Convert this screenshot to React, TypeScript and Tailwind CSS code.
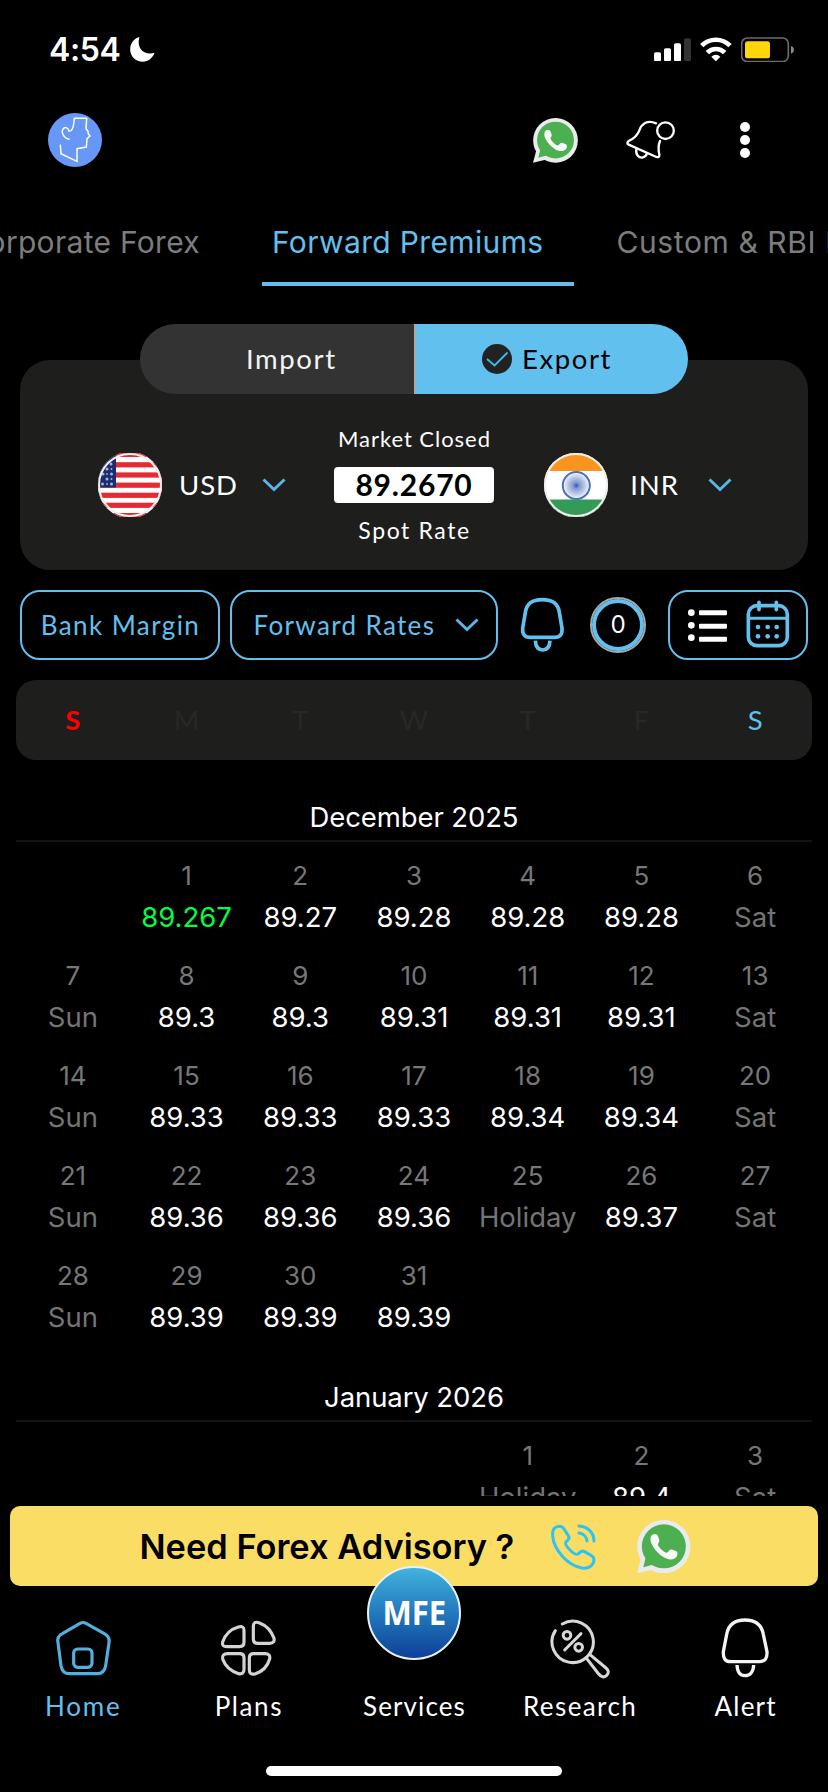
import type { ReactNode } from "react";

function WhatsApp({ className }: { className: string }) {
  return (
    <svg viewBox="670 89 161 161" className={className}>
      <path d="M670 249 L683 201 L722 237 Z" fill="#e9ebee" />
      <circle cx="750.500" cy="169" r="80" fill="#e9ebee" />
      <path d="M689 231 L697 198 L722 222 Z" fill="#4caf50" />
      <circle cx="750.500" cy="168" r="66" fill="#4caf50" />
      <path
        fill="#fafafa"
        d="M719 132H727C731 132 732 136 736 146C738 152 737 154 733 160C730 164 740 174 746 180C752 186 759 189 762 186L768 179C771 176 775 177 779 179L788 183C792 186 792 191 790 197C786 206 773 209 762 206C740 200 716 173 711 153C709 142 713 134 719 132Z"
      />
    </svg>
  );
}

function Chevron({ className }: { className: string }) {
  return (
    <svg viewBox="0 0 24 14" className={className} fill="none" stroke="#5bb5e6" strokeWidth="3">
      <path d="M1.500 1.500 L12 11.500 L22.500 1.500" />
    </svg>
  );
}

function StatusBar() {
  return (
    <div className="flex h-[99px] items-center justify-between pl-[49px] pr-[33.500px]">
      <div className="flex items-center">
        <span className="w-[81px] text-[32px] font-semibold tracking-[-0.400px]">4:54</span>
        <svg viewBox="390 111 74 76" className="h-[25px] w-[24.700px]" fill="#fff">
          <path d="M418 111C400 116 390 132 390 149C390 170 407 186 428 186C445 186 459 175 464 159C434 168 408 148 418 111Z" />
        </svg>
      </div>
      <div className="flex items-center gap-[9.500px]">
        <svg viewBox="717 113 111 70" className="h-[23.300px] w-[37px]" fill="#fff">
          <rect x="717" y="156" width="21" height="27" rx="5" />
          <rect x="747" y="144" width="21" height="39" rx="5" />
          <rect x="777" y="129" width="21" height="54" rx="5" />
          <rect x="807" y="114" width="21" height="69" rx="5" fill="#333" />
        </svg>
        <svg viewBox="857 110 95 74" className="h-[24.700px] w-[31.700px]" fill="none" stroke="#fff" strokeWidth="14">
          <path d="M862 136A60 60 0 0 1 947 136" />
          <path d="M879 157A36 36 0 0 1 931 157" />
          <path d="M904.500 183L891 169Q904.500 158 918 169Z" fill="#fff" stroke="none" />
        </svg>
        <svg viewBox="981 110 160 77" className="h-[25.700px] w-[53.300px]">
          <rect x="983" y="113" width="140" height="71" rx="17" fill="none" stroke="#6b6b6b" strokeWidth="5" />
          <rect x="993" y="123" width="75" height="51" rx="8" fill="#ffd60a" />
          <path d="M1131 137Q1140 140 1140 148.500Q1140 157 1131 160Z" fill="#8a8a8a" />
        </svg>
      </div>
    </div>
  );
}

function Header() {
  return (
    <div className="flex h-[82px] items-center pl-12 pr-[78px]">
      <svg viewBox="144 339 162 162" className="h-[54px] w-[54px]">
        <circle cx="225" cy="420" r="81" fill="#6797f7" />
        <path
          d="M209 418C190 415 182 395 190 386C196 379 206 384 206 393C214 394 219 388 221 372L223 355H260L258 386L264 394L265 402L270 408L261 416L259 441L231 446V484L183 461L181 434"
          fill="none"
          stroke="#fff"
          strokeWidth="4.500"
        />
      </svg>
      <WhatsApp className="ml-auto h-[45px] w-[45px]" />
      <svg
        viewBox="632 358 152 124"
        className="ml-[46.500px] h-[41.300px] w-[50.700px]"
        fill="none"
        stroke="#fff"
        strokeWidth="7"
        strokeLinecap="round"
      >
        <path d="M725 371C698 359 681 374 675 392C669 408 660 416 643 424Q635 430 643 435L726 472Q736 475 735 465C731 448 731 438 737 424" />
        <circle cx="753.500" cy="393" r="25" />
        <path d="M666 449C663 465 673 475 684 474C691 473 696 468 698 461" />
      </svg>
      <div className="ml-[64.500px] flex flex-col gap-[2.800px]">
        <i className="size-[10px] rounded-full bg-white" />
        <i className="size-[10px] rounded-full bg-white" />
        <i className="size-[10px] rounded-full bg-white" />
      </div>
    </div>
  );
}

function Tabs() {
  return (
    <div className="flex h-[105px] overflow-hidden whitespace-nowrap pt-[16px] text-[30px] leading-[90px] tracking-[0.300px] text-[#7d7d7d]">
      <div className="flex w-[262px] shrink-0 justify-end pr-[62px]">Corporate Forex</div>
      <div className="h-[89px] w-[312px] shrink-0 border-b-4 border-[#62c0ef] pl-[10px] tracking-[0.350px] text-[#62c0ef]">
        Forward Premiums
      </div>
      <div className="shrink-0 pl-[42.500px] tracking-[0.600px]">Custom &amp; RBI Rates</div>
    </div>
  );
}

function Flag({ children }: { children: ReactNode }) {
  return (
    <svg viewBox="0 0 64 64" className="size-16 shrink-0">
      <g clipPath="inset(0 round 32px)">{children}</g>
      <circle cx="32" cy="32" r="31" fill="none" stroke="#efefef" strokeWidth="2" />
    </svg>
  );
}

const usStripes = [-1.200, 9.200, 19.400, 29.600, 39.700, 49.700, 60];
const usStars = [
  [13, 11], [9, 16], [13.500, 21], [5, 21], [9, 26], [4.500, 31], [13.500, 31],
];

function UsFlag() {
  return (
    <Flag>
      <rect width="64" height="64" fill="#fff" />
      {usStripes.map((y) => (
        <rect key={y} y={y} width="64" height="5.200" fill="#e42a33" />
      ))}
      <rect width="18" height="34.500" fill="#1b2d6e" />
      {usStars.map(([x, y]) => (
        <circle key={`${x}-${y}`} cx={x} cy={y} r="1.500" fill="#aab4d6" />
      ))}
      <circle cx="9" cy="21" r="0.900" fill="#aab4d6" />
      <circle cx="9" cy="31" r="0.900" fill="#aab4d6" />
      <circle cx="13.500" cy="16" r="0.900" fill="#aab4d6" />
      <circle cx="13.500" cy="26" r="0.900" fill="#aab4d6" />
    </Flag>
  );
}

function IndiaFlag() {
  return (
    <Flag>
      <defs>
        <radialGradient id="chakra">
          <stop offset="0" stopColor="#2a56ae" />
          <stop offset="0.250" stopColor="#7f98cf" />
          <stop offset="1" stopColor="#e3e9f5" />
        </radialGradient>
      </defs>
      <rect width="64" height="64" fill="#fff" />
      <rect width="64" height="18" fill="#fb941e" />
      <rect y="46.500" width="64" height="18" fill="#349a57" />
      <circle cx="32.300" cy="32.500" r="12" fill="url(#chakra)" />
      <circle cx="32.300" cy="32.500" r="13.500" fill="none" stroke="#4a6fbb" strokeWidth="2" />
    </Flag>
  );
}

function Currency({ flag, code }: { flag: ReactNode; code: string }) {
  return (
    <div className="flex items-center">
      {flag}
      <span className="w-[100px] pr-[7px] text-center text-[27.500px] tracking-[0.900px]">{code}</span>
      <Chevron className="h-[14px] w-6" />
    </div>
  );
}

function RateCard() {
  return (
    <div className="font-[Lato,sans-serif]">
      <div className="relative z-10 mx-auto flex h-[70px] w-[548px] overflow-hidden rounded-full text-[27.500px] tracking-[1.600px]">
        <div className="flex w-[276px] items-center border-r-2 border-[#a9a9a9] bg-[#333] pl-[106px] text-[#f4f4f4]">
          Import
        </div>
        <div className="flex w-[272px] items-center bg-[#62c0ef] pl-[66px] text-black">
          <svg viewBox="0 0 30 30" className="mr-[10px] size-[30px]">
            <circle cx="15" cy="15" r="15" fill="#222" />
            <path d="M5 15L12.500 21.500L25.500 8.500" fill="none" stroke="#35bdf0" strokeWidth="1.800" />
          </svg>
          Export
        </div>
      </div>
      <div className="mx-5 -mt-[34px] flex h-[210px] rounded-[30px] bg-[#1e1e1c] pl-[78px] pt-[59px]">
        <div className="flex h-[132px] items-center">
          <Currency flag={<UsFlag />} code="USD" />
          <div className="ml-[48px] mr-[50px] flex w-[160px] flex-col items-center whitespace-nowrap">
            <div className="h-[30px] pl-px text-[22px] leading-[30px] tracking-[0.950px]">Market Closed</div>
            <div className="my-[13px] h-[36px] w-[160px] rounded bg-white text-center text-[30px] font-bold leading-[35px] tracking-[0.800px] text-black">
              89.2670
            </div>
            <div className="h-[30px] pl-px text-[23px] leading-[29px] tracking-[1.600px]">Spot Rate</div>
          </div>
          <Currency flag={<IndiaFlag />} code="INR" />
        </div>
      </div>
    </div>
  );
}

function Toolbar() {
  return (
    <div className="mx-5 mt-5 flex h-[70px] items-center font-[Lato,sans-serif] text-[26px] text-[#62c0ef]">
      <div className="flex h-[70px] w-[200px] items-center justify-center whitespace-nowrap rounded-[20px] border-2 border-[#62c0ef] pl-px tracking-[1.400px]">
        Bank Margin
      </div>
      <div className="ml-[10px] flex h-[70px] w-[268px] items-center justify-between whitespace-nowrap rounded-[20px] border-2 border-[#62c0ef] pl-[21.500px] pr-[17px] tracking-[1.350px]">
        Forward Rates
        <Chevron className="h-[14px] w-6" />
      </div>
      <svg
        viewBox="318 88 134 166"
        className="ml-[22px] h-[55.300px] w-[44.700px]"
        fill="none"
        stroke="#62c0ef"
        strokeWidth="11"
      >
        <path d="M385 96C417 96 432 108 436 134L444 182Q446 209 422 209H348Q324 209 326 182L334 134C338 108 353 96 385 96Z" />
        <path d="M364 219C365 238 374 247 386 247C398 247 407 238 408 219" />
      </svg>
      <div className="ml-[25.300px] flex size-[56px] items-center justify-center rounded-full border-2 border-[#a9a9a9]">
        <div className="flex size-[52px] items-center justify-center rounded-full border-4 border-[#62c0ef] pb-[2px] text-[25px] text-white">
          <span className="scale-x-[0.950]">0</span>
        </div>
      </div>
      <div className="ml-auto flex h-[70px] w-[140px] items-center rounded-[20px] border-2 border-[#62c0ef] pl-[16px]">
        <svg viewBox="816 112 130 110" className="h-[36.700px] w-[43.300px]" fill="#fff">
          <circle cx="832" cy="129" r="10" />
          <circle cx="832" cy="167" r="10" />
          <circle cx="832" cy="204" r="10" />
          <rect x="855" y="122" width="84" height="15" rx="3" />
          <rect x="855" y="162" width="84" height="15" rx="3" />
          <rect x="855" y="201" width="84" height="15" rx="3" />
        </svg>
        <svg viewBox="992 90 138 148" className="ml-[15.300px] h-[49.300px] w-[46px]" fill="none" stroke="#62c0ef" strokeWidth="11">
          <rect x="1002" y="107" width="117" height="120" rx="26" />
          <path d="M1002 145H1119" strokeWidth="9" />
          <path d="M1034 97V119M1086 97V119" strokeLinecap="round" />
          <g fill="#62c0ef" stroke="none">
            <circle cx="1031" cy="171" r="7" />
            <circle cx="1060" cy="171" r="7" />
            <circle cx="1087" cy="171" r="7" />
            <circle cx="1031" cy="199" r="7" />
            <circle cx="1060" cy="199" r="7" />
            <circle cx="1087" cy="199" r="7" />
          </g>
        </svg>
      </div>
    </div>
  );
}

function WeekHeader() {
  return (
    <div className="mx-4 mt-5 grid h-20 grid-cols-7 items-center rounded-[20px] bg-[#1e1e1c] pb-px text-center font-[Lato,sans-serif] text-[27.500px] text-[#282828]">
      <span className="font-bold text-[#ff0000]">S</span>
      <span>M</span>
      <span>T</span>
      <span>W</span>
      <span>T</span>
      <span>F</span>
      <span className="text-[#62c0ef]">S</span>
    </div>
  );
}

type Day = [number, string] | null;

const december: Day[] = [
  null, [1, "89.267"], [2, "89.27"], [3, "89.28"], [4, "89.28"], [5, "89.28"], [6, "Sat"],
  [7, "Sun"], [8, "89.3"], [9, "89.3"], [10, "89.31"], [11, "89.31"], [12, "89.31"], [13, "Sat"],
  [14, "Sun"], [15, "89.33"], [16, "89.33"], [17, "89.33"], [18, "89.34"], [19, "89.34"], [20, "Sat"],
  [21, "Sun"], [22, "89.36"], [23, "89.36"], [24, "89.36"], [25, "Holiday"], [26, "89.37"], [27, "Sat"],
  [28, "Sun"], [29, "89.39"], [30, "89.39"], [31, "89.39"], null, null, null,
];

const january: Day[] = [null, null, null, null, [1, "Holiday"], [2, "89.4"], [3, "Sat"]];

function valueColor(value: string) {
  if (value === "89.267") return "text-[#00ff41]";
  return /^\d/.test(value) ? "text-white" : "text-[#747474]";
}

function Month({ title, days }: { title: string; days: Day[] }) {
  return (
    <div>
      <div className="h-12 border-b-2 border-[#131313] text-center text-[27.500px] leading-[46px] tracking-[-0.100px]">
        {title}
      </div>
      <div className="grid grid-cols-7 text-center">
        {days.map((day, i) => (
          <div key={i} className="h-[100px] pt-[15px]">
            {day && (
              <>
                <div className="h-[37px] text-[26px] leading-[37px] text-[#777]">{day[0]}</div>
                <div className={`h-[46px] text-[27.500px] leading-[46px] ${valueColor(day[1])}`}>{day[1]}</div>
              </>
            )}
          </div>
        ))}
      </div>
    </div>
  );
}

function Banner() {
  return (
    <div className="mx-[10px] mt-[10px] flex h-20 items-center rounded-[10px] bg-[#fadd65] pl-[129.500px] text-black">
      <span className="w-[409.500px] whitespace-nowrap pt-[2px] text-[34.400px] font-semibold">Need Forex Advisory ?</span>
      <svg
        viewBox="405 103 145 145"
        className="mt-[3px] size-[48.300px]"
        fill="none"
        stroke="#2cc4f5"
        strokeWidth="9"
        strokeLinecap="round"
        strokeLinejoin="round"
      >
        <path d="M416 142C414 120 424 113 436 113C446 113 448 118 452 124L463 141C467 147 466 150 462 154L456 160C452 165 458 174 468 184C478 194 486 200 492 196L500 190C504 186 508 187 512 189L534 202C541 207 541 214 538 222C532 236 518 240 504 238C460 230 420 184 416 142Z" />
        <path d="M495 112C522 114 540 132 540 157" />
        <path d="M495 133C509 135 518 145 519 157" />
      </svg>
      <WhatsApp className="ml-[40px] mt-px size-[53.700px]" />
    </div>
  );
}

function HomeIcon() {
  return (
    <svg viewBox="160 386 174 174" className="size-[58px]" fill="none" stroke="#52afde" strokeWidth="9.500">
      <path d="M238 399Q247 394 256 399L311 430Q328 439 325 457L315 526Q311 550 290 550H206Q185 550 181 526L172 457Q168 439 185 430Z" />
      <rect x="219" y="476" width="55" height="55" rx="12" />
    </svg>
  );
}

function PlansIcon() {
  return (
    <svg viewBox="658 386 174 174" className="size-[58px]" fill="none" stroke="#d4d4d4" strokeWidth="9.500">
      <path d="M716 410Q733 405 733 420V456Q733 469 720 469H682Q665 469 669 455Q681 420 716 410Z" />
      <path d="M778 397Q761 392 761 408V447Q761 459 773 459H810Q826 459 823 444Q811 409 778 397Z" />
      <path d="M684 490H720Q733 490 733 503V537Q733 553 717 550Q680 538 669 506Q666 490 684 490Z" />
      <path d="M762 490H796Q813 490 810 506Q800 540 766 551Q749 554 749 538V503Q749 490 762 490Z" />
    </svg>
  );
}

function ResearchIcon() {
  return (
    <svg
      viewBox="402 378 186 186"
      className="size-[62px]"
      fill="none"
      stroke="#d8d8d8"
      strokeWidth="9"
      strokeLinecap="round"
    >
      <path d="M442 399A62 62 0 1 1 421 419" />
      <path d="M513 500L551 549Q563 564 575 553Q586 542 573 531L525 491" />
      <circle cx="456" cy="433" r="11.500" />
      <circle cx="491" cy="469" r="11.500" />
      <path d="M449 477L498 428" />
    </svg>
  );
}

function AlertIcon() {
  return (
    <svg viewBox="918 384 150 184" className="h-[61.300px] w-[50px]" fill="none" stroke="#f4f4f4" strokeWidth="10">
      <path d="M993 393C1024 393 1043 408 1048 436L1059 488Q1061 518 1036 518H950Q926 518 928 488L938 436C943 408 962 393 993 393Z" />
      <path d="M969 528C970 550 980 560 993 560C1007 560 1018 550 1019 528" />
    </svg>
  );
}

function NavItem({ icon, children }: { icon?: ReactNode; children: ReactNode }) {
  return (
    <div className="flex flex-col items-center">
      <div className="flex h-[62px] items-center">{icon}</div>
      <div className="mt-[10px] h-[34px] pl-px leading-[34px]">{children}</div>
    </div>
  );
}

function BottomNav() {
  return (
    <div className="relative h-[206px] pt-[31px] font-[Lato,sans-serif] text-[26px]">
      <div className="absolute -top-5 left-[367px] flex size-[94px] items-center justify-center rounded-full border-2 border-[#e8f1f8] bg-linear-to-b from-[#41b3de] to-[#113f98] font-['Noto_Sans',sans-serif] text-[34.500px] font-bold">
        <span className="-mt-[2px] scale-x-[0.900]">MFE</span>
      </div>
      <div className="grid grid-cols-5">
        <NavItem icon={<HomeIcon />}>
          <span className="tracking-[1.800px] text-[#62c0ef]">Home</span>
        </NavItem>
        <NavItem icon={<PlansIcon />}>
          <span className="tracking-[1.600px]">Plans</span>
        </NavItem>
        <NavItem>
          <span className="tracking-[1.100px]">Services</span>
        </NavItem>
        <NavItem icon={<ResearchIcon />}>
          <span className="tracking-[1.400px]">Research</span>
        </NavItem>
        <NavItem icon={<AlertIcon />}>
          <span className="tracking-[1.200px]">Alert</span>
        </NavItem>
      </div>
      <div className="mx-auto mt-[43px] h-[10px] w-[296px] rounded-full bg-white" />
    </div>
  );
}

export default function App() {
  return (
    <div className="h-[1792px] w-[828px] overflow-hidden bg-black font-[Inter,sans-serif] text-white">
      <StatusBar />
      <Header />
      <Tabs />
      <div className="pt-[38px]">
        <RateCard />
      </div>
      <Toolbar />
      <WeekHeader />
      <div className="mx-4 flex h-[736px] flex-col gap-8 overflow-hidden pt-[34px]">
        <Month title="December 2025" days={december} />
        <Month title="January 2026" days={january} />
      </div>
      <Banner />
      <BottomNav />
    </div>
  );
}
